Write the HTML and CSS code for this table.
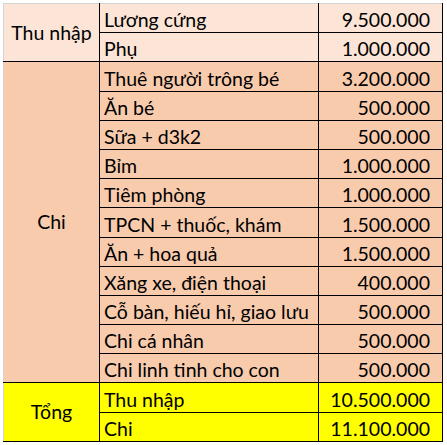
FILE: index.html
```html
<!DOCTYPE html>
<html lang="vi">
<head>
<meta charset="utf-8">
<link rel="stylesheet" href="styles.css">
</head>
<body>
<table class="sheet">
  <colgroup>
    <col class="c1"><col class="c2"><col class="c3">
  </colgroup>
  <tbody>
    <tr class="inc">
      <td class="grp first" rowspan="2">Thu nhập</td>
      <td class="lbl">Lương cứng</td>
      <td class="num">9.500.000</td>
    </tr>
    <tr class="inc">
      <td class="lbl">Phụ</td>
      <td class="num">1.000.000</td>
    </tr>
    <tr class="exp">
      <td class="grp first" rowspan="11">Chi</td>
      <td class="lbl">Thuê người trông bé</td>
      <td class="num">3.200.000</td>
    </tr>
    <tr class="exp"><td class="lbl">Ăn bé</td><td class="num">500.000</td></tr>
    <tr class="exp"><td class="lbl">Sữa + d3k2</td><td class="num">500.000</td></tr>
    <tr class="exp"><td class="lbl">Bỉm</td><td class="num">1.000.000</td></tr>
    <tr class="exp"><td class="lbl">Tiêm phòng</td><td class="num">1.000.000</td></tr>
    <tr class="exp"><td class="lbl">TPCN + thuốc, khám</td><td class="num">1.500.000</td></tr>
    <tr class="exp"><td class="lbl">Ăn + hoa quả</td><td class="num">1.500.000</td></tr>
    <tr class="exp"><td class="lbl">Xăng xe, điện thoại</td><td class="num">400.000</td></tr>
    <tr class="exp"><td class="lbl">Cỗ bàn, hiếu hỉ, giao lưu</td><td class="num">500.000</td></tr>
    <tr class="exp"><td class="lbl">Chi cá nhân</td><td class="num">500.000</td></tr>
    <tr class="exp"><td class="lbl">Chi linh tinh cho con</td><td class="num">500.000</td></tr>
    <tr class="tot">
      <td class="grp first" rowspan="2">Tổng</td>
      <td class="lbl">Thu nhập</td>
      <td class="num">10.500.000</td>
    </tr>
    <tr class="tot"><td class="lbl">Chi</td><td class="num">11.100.000</td></tr>
  </tbody>
</table>
</body>
</html>
```

FILE: styles.css
```css
html, body {
  margin: 0;
  padding: 0;
  background: #ffffff;
}
body {
  padding: 3px 0 0 3px;
  font-family: Lato, "Open Sans", sans-serif;
  font-size: 19.5px;
  color: #000000;
}
.sheet {
  border-collapse: collapse;
  table-layout: fixed;
  width: 440px;
}
.c1 { width: 96px; }
.c2 { width: 219px; }
.c3 { width: 124px; }
.sheet tr { height: 29.2px; }
.sheet td {
  padding: 0;
  border: 1px solid #000000;
  line-height: 20px;
  vertical-align: bottom;
  white-space: nowrap;
  overflow: hidden;
}
.sheet td.first { border-left: 1px solid #d4d4d4; }
.sheet tr:first-child td { border-top: 1px solid #d4d4d4; }
.inc td { background: #fce4d6; }
.exp td { background: #f8cbad; }
.tot td { background: #ffff00; }
.sheet td.grp {
  text-align: center;
  vertical-align: middle;
}
.sheet td.lbl {
  padding-left: 4px;
  padding-bottom: 2px;
}
.sheet td.num {
  text-align: right;
  padding-right: 12px;
  padding-bottom: 2px;
}
```
